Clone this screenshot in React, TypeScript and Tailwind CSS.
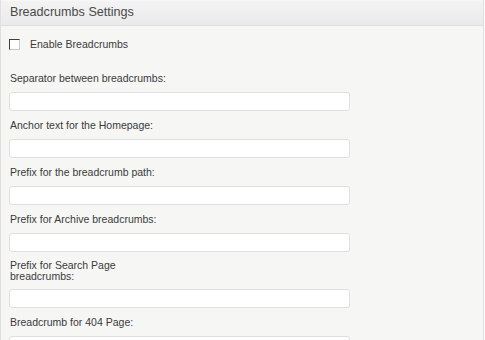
import React from "react";

const fields: { label: React.ReactNode; two?: boolean }[] = [
  { label: "Separator between breadcrumbs:" },
  { label: "Anchor text for the Homepage:" },
  { label: "Prefix for the breadcrumb path:" },
  { label: "Prefix for Archive breadcrumbs:" },
  {
    label: (
      <>
        Prefix for Search Page
        <br />
        breadcrumbs:
      </>
    ),
    two: true,
  },
  { label: "Breadcrumb for 404 Page:" },
];

export default function App() {
  return (
    <div
      className="w-[485px] h-[340px] overflow-hidden bg-white"
      style={{ fontFamily: '"Liberation Sans", Arial, sans-serif' }}
    >
      <div className="w-[484px] h-[360px] border-l border-r border-[#dfdfdf] bg-[#f6f7f5]">
        <div className="h-[26px] border-b border-[#dcdcdc] bg-gradient-to-b from-[#f3f3f3] to-[#eaeaea] border-t border-t-[#f7f7f7] flex items-center pl-[9px]">
          <span className="text-[12.6px] leading-[15px] text-[#4a4a4a] pb-[1px]">
            Breadcrumbs Settings
          </span>
        </div>
        <div className="pl-[8px] pt-[13px]">
          <div className="flex items-center h-[11px]">
            <div className="w-[11px] h-[11px] border-t border-l border-[#404040] border-b border-r border-b-[#c8c8c8] border-r-[#c8c8c8] bg-white" />
            <span className="ml-[10px] text-[10.5px] leading-[13px] text-[#3a3a3a]">
              Enable Breadcrumbs
            </span>
          </div>
          <div className="pt-[22px] flex flex-col">
            {fields.map((f, i) => (
              <div key={i} className="flex flex-col">
                <label
                  className={`pl-[1px] text-[10.5px] text-[#3a3a3a] mb-[7px] ${
                    f.two ? "leading-[11px]" : "leading-[13px]"
                  }`}
                >
                  {f.label}
                </label>
                <div className="w-[341px] h-[19px] bg-white border border-[#dfdfdf] rounded-[3px] mb-[8px]" />
              </div>
            ))}
          </div>
        </div>
      </div>
    </div>
  );
}
